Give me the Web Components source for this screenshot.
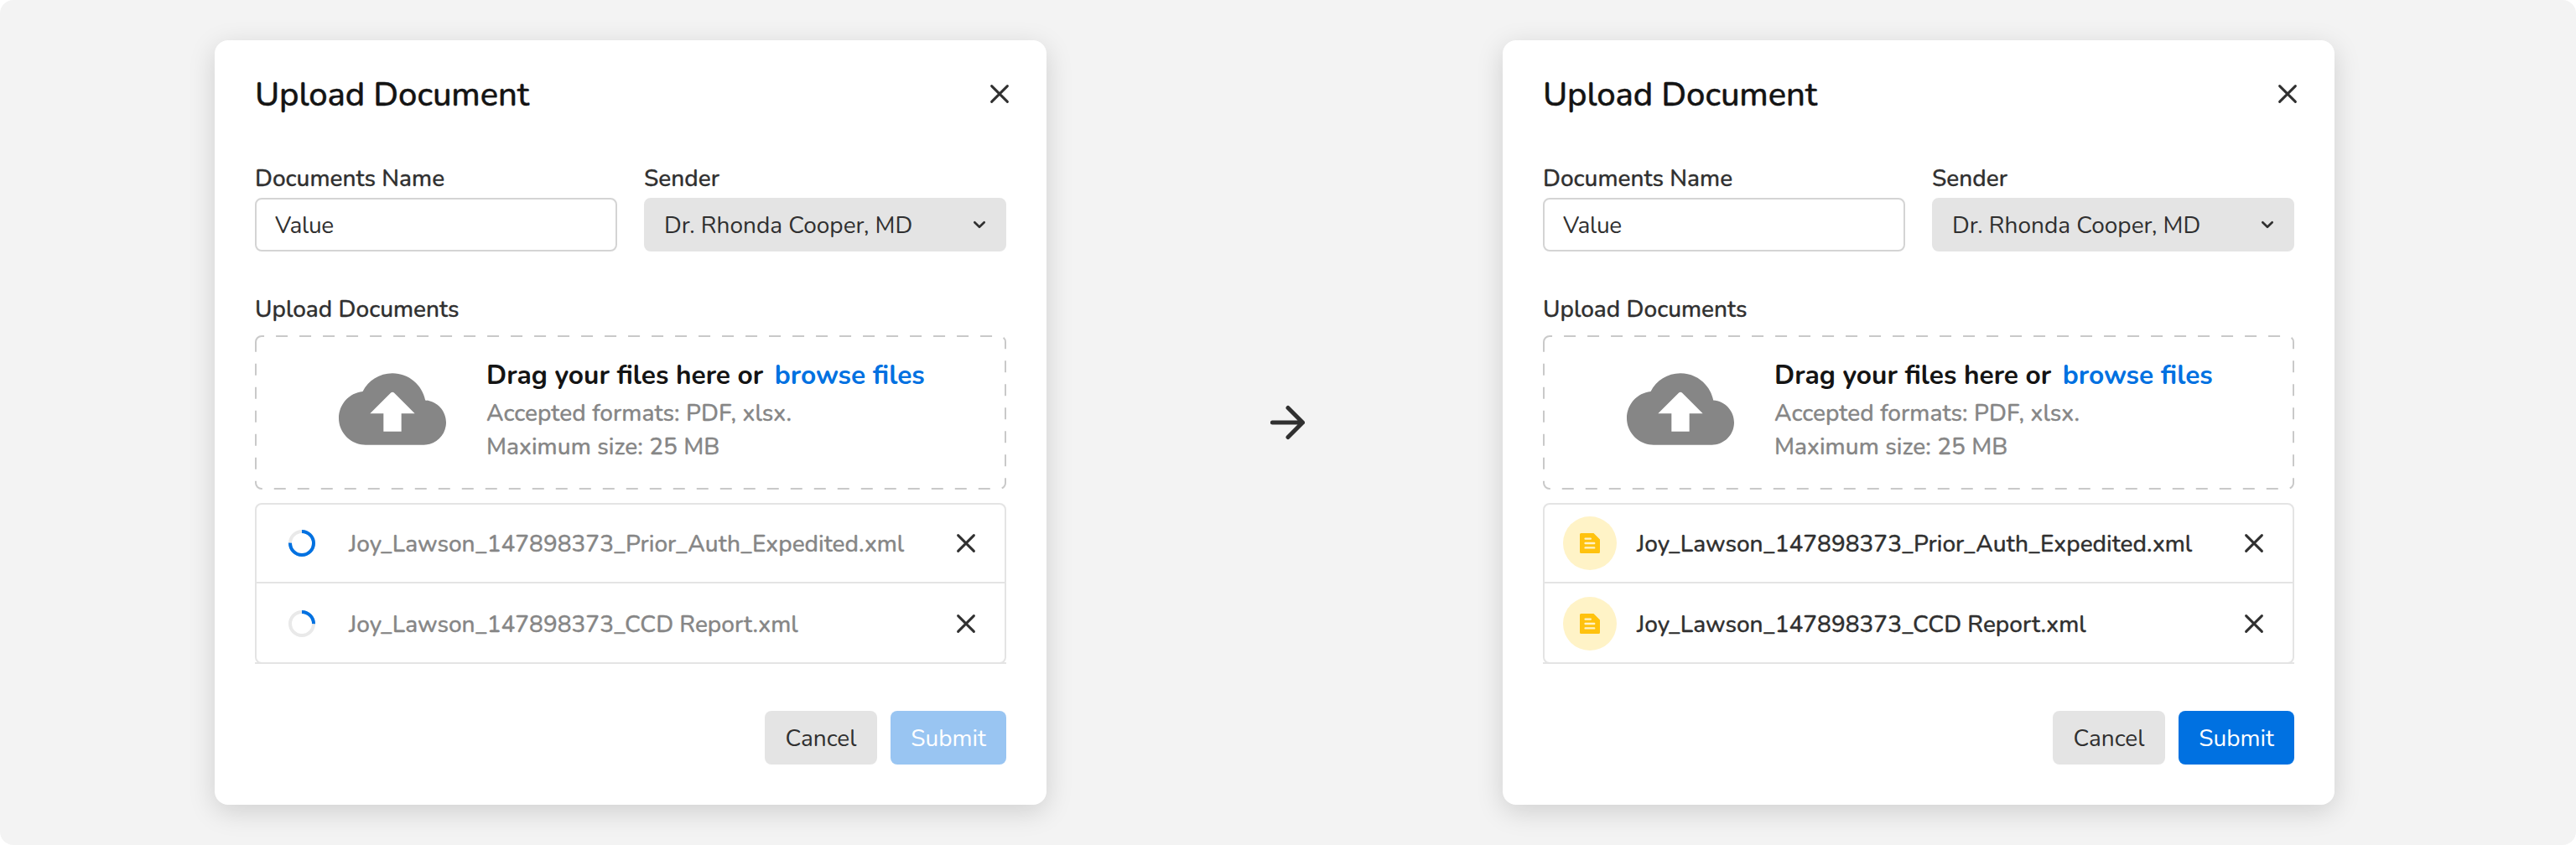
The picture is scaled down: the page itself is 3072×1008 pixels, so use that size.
<!DOCTYPE html>
<html lang="en">
<head>
<meta charset="utf-8">
<title>Upload Document</title>
<style>
  html, body { margin: 0; background: #fff; }
  body { font-family: Nunito, Lato, "Open Sans", sans-serif; color: #303030; }
</style>
</head>
<body>
<upload-board>
  <upload-dialog state="loading"></upload-dialog>
  <flow-arrow></flow-arrow>
  <upload-dialog state="done"></upload-dialog>
</upload-board>

<script>
const define = (name, render) => customElements.define(name, class extends HTMLElement {
  constructor() { super(); this.attachShadow({ mode: 'open' }); }
  connectedCallback() { this.shadowRoot.innerHTML = render(this); }
});

define('upload-board', () => `
  <style>
    :host { display: flex; justify-content: space-between; align-items: center; box-sizing: border-box;
      width: 3072px; height: 1008px; padding: 0 288px 0 256px; background: #f3f3f3; border-radius: 16px; }
  </style><slot></slot>`);

define('flow-arrow', () => `
  <style>:host { display: flex; margin-left: 32px; } svg { display: block; }</style>
  <svg width="48" height="48" viewBox="0 0 48 48" fill="none" stroke="#303030" stroke-width="5" stroke-linecap="round" stroke-linejoin="round">
    <path d="M5.400 24H41.500M24 6.500L41.500 24 24 41.500"/></svg>`);

define('cross-icon', () => `
  <style>:host { display: block; flex: none; width: 48px; height: 48px; } svg { display: block; }</style>
  <svg width="48" height="48" viewBox="0 0 48 48" stroke="#303030" stroke-width="3" stroke-linecap="round">
    <path d="M14.600 14.600L33.400 33.400M33.400 14.600L14.600 33.400"/></svg>`);

define('form-field', el => `
  <style>
    :host { display: block; width: 432px; }
    label { display: block; font-size: 28px; line-height: 40px; margin-bottom: 3px; font-weight: 500; -webkit-text-stroke: .3px; }
    .box { display: flex; justify-content: space-between; align-items: center; box-sizing: border-box; height: 64px;
      border-radius: 8px; padding: 2px 22px 0; border: 2px solid #d4d4d4; background: #fff; font-size: 28px; letter-spacing: -.3px; }
    .box.select { background: #e4e4e4; border-color: #e4e4e4; letter-spacing: 0; }
  </style>
  <label>${el.getAttribute('label')}</label>
  <div class="box ${el.hasAttribute('select') ? 'select' : ''}"><slot></slot>
    ${el.hasAttribute('select') ? `<svg width="16" height="16" viewBox="0 0 16 16" fill="none" stroke="#303030" stroke-width="2.600" stroke-linecap="round" stroke-linejoin="round"><path d="M2.300 4.200L8 9.800l5.700-5.600"/></svg>` : ''}
  </div>`);

define('drop-zone', () => `
  <style>
    :host { display: grid; width: 896px; height: 184px; }
    .frame, .content { grid-area: 1 / 1; }
    .content { display: flex; gap: 48px; padding: 24px 0 0 100px; }
    svg { display: block; flex: none; }
    .head { display: flex; gap: 13.5px; font-size: 31.700px; line-height: 45px; font-weight: 700; color: #141414; margin: 1px 0 3px; }
    .link { color: #0071e1; }
    .hint { font-size: 28px; line-height: 40px; color: #868686; font-weight: 500; -webkit-text-stroke: .3px; letter-spacing: .05px; }
  </style>
  <svg class="frame" width="896" height="184" fill="none" stroke="#c9c9c9" stroke-width="2" stroke-dasharray="14 14">
    <path d="M1 8A7 7 0 0 1 8 1H888A7 7 0 0 1 895 8V176A7 7 0 0 1 888 183H8A7 7 0 0 1 1 176Z"/></svg>
  <div class="content">
    <svg width="128" height="128" viewBox="0 0 24 24" fill="#868686">
      <path d="M19.350 10.040C18.670 6.590 15.640 4 12 4 9.110 4 6.600 5.640 5.350 8.040 2.340 8.360 0 10.910 0 14c0 3.310 2.690 6 6 6h13c2.760 0 5-2.240 5-5 0-2.640-2.050-4.780-4.650-4.960zM14 13v4h-4v-4H7l4.650-4.650c.2-.2.510-.2.710 0L17 13h-3z"/></svg>
    <div>
      <div class="head"><span>Drag your files here or</span><span class="link">browse files</span></div>
      <div class="hint">Accepted formats: PDF, xlsx.</div>
      <div class="hint">Maximum size: 25 MB</div>
    </div>
  </div>`);

define('file-badge', () => `
  <style>:host { display: flex; align-items: center; justify-content: center; width: 64px; height: 64px; border-radius: 50%; background: #fff3c7; }
    svg { display: block; }</style>
  <svg width="24" height="24" viewBox="0 0 24 24">
    <path fill="#ffc20e" d="M1.500 0H16.500L24 7.500V22.500A1.500 1.500 0 0 1 22.500 24H1.500A1.500 1.500 0 0 1 0 22.500V1.500A1.500 1.500 0 0 1 1.500 0Z"/>
    <path stroke="#fff3c7" stroke-width="2.400" stroke-linecap="round" d="M6.600 6.600H12.800M6.600 12H17.200M6.600 17.400H17.200"/></svg>`);

define('progress-ring', el => {
  const len = 2 * Math.PI * 14;
  return `
  <style>:host { display: block; width: 32px; height: 32px; margin: 0 16px; } svg { display: block; }</style>
  <svg width="32" height="32" viewBox="0 0 32 32" fill="none" stroke-width="4">
    <circle cx="16" cy="16" r="14" stroke="#e9e9e9"/>
    <circle cx="16" cy="16" r="14" stroke="#0071e1" stroke-dasharray="${len * el.getAttribute('value')} ${len}" transform="rotate(-90 16 16)"/></svg>`;
});

define('file-row', () => `
  <style>
    :host { display: flex; align-items: center; box-sizing: border-box; height: 96px; padding: 2px 24px 0; border-bottom: 2px solid #e4e4e4;
      font-size: 28px; font-weight: 500; color: #303030; }
    :host([pending]) { color: #868686; }
    .name { flex: 1; margin-left: 24px; padding-top: 2px; white-space: nowrap; -webkit-text-stroke: .3px; letter-spacing: .01px; }
  </style>
  <slot name="icon"></slot><div class="name"><slot></slot></div><cross-icon></cross-icon>`);

define('ui-button', () => `
  <style>
    :host { display: flex; align-items: center; justify-content: center; box-sizing: border-box; height: 64px; padding-top: 2px;
      width: 134px; border-radius: 8px; background: #e4e4e4; color: #303030; font-size: 28px; }
    :host([primary]) { width: 138px; background: #0071e1; color: #fff; }
    :host([disabled]) { background: #99c5f2; }
  </style><slot></slot>`);

define('upload-dialog', el => {
  const loading = el.getAttribute('state') === 'loading';
  const row = (name, value) => `<file-row ${loading ? 'pending' : ''}>
    ${loading ? `<progress-ring slot="icon" value="${value}"></progress-ring>` : '<file-badge slot="icon"></file-badge>'}${name}</file-row>`;
  return `
  <style>
    :host { display: flex; flex-direction: column; box-sizing: border-box; width: 992px; height: 912px; padding: 37px 48px 46px;
      border-radius: 16px; background: #fff; box-shadow: 0 8px 32px rgba(0,0,0,.15); }
    header { display: flex; align-items: center; justify-content: space-between; height: 56px; margin-bottom: 52px; }
    h2 { margin: 0; font-size: 40px; line-height: 56px; font-weight: 500; -webkit-text-stroke: .4px; letter-spacing: -.12px; color: #141414; }
    header cross-icon { margin: -2px -16px 0 0; }
    .fields { display: flex; gap: 32px; margin-bottom: 49px; }
    .label { font-size: 28px; line-height: 40px; font-weight: 500; -webkit-text-stroke: .3px; margin-bottom: 11px; }
    .files { margin-top: 16px; display: grid; }
    .outline, .rows { grid-area: 1 / 1; }
    .outline { border-radius: 8px; box-shadow: inset 0 0 0 2px #e4e4e4; }
    footer { display: flex; justify-content: flex-end; gap: 16px; margin-top: 56px; }
  </style>
  <header><h2>Upload Document</h2><cross-icon></cross-icon></header>
  <div class="fields">
    <form-field label="Documents Name">Value</form-field>
    <form-field label="Sender" select>Dr. Rhonda Cooper, MD</form-field>
  </div>
  <div class="label">Upload Documents</div>
  <drop-zone></drop-zone>
  <div class="files"><div class="outline"></div><div class="rows">
    ${row('Joy_Lawson_147898373_Prior_Auth_Expedited.xml', .75)}
    ${row('Joy_Lawson_147898373_CCD Report.xml', .25)}
  </div></div>
  <footer>
    <ui-button>Cancel</ui-button>
    <ui-button primary ${loading ? 'disabled' : ''}>Submit</ui-button>
  </footer>`;
});
</script>
</body>
</html>
